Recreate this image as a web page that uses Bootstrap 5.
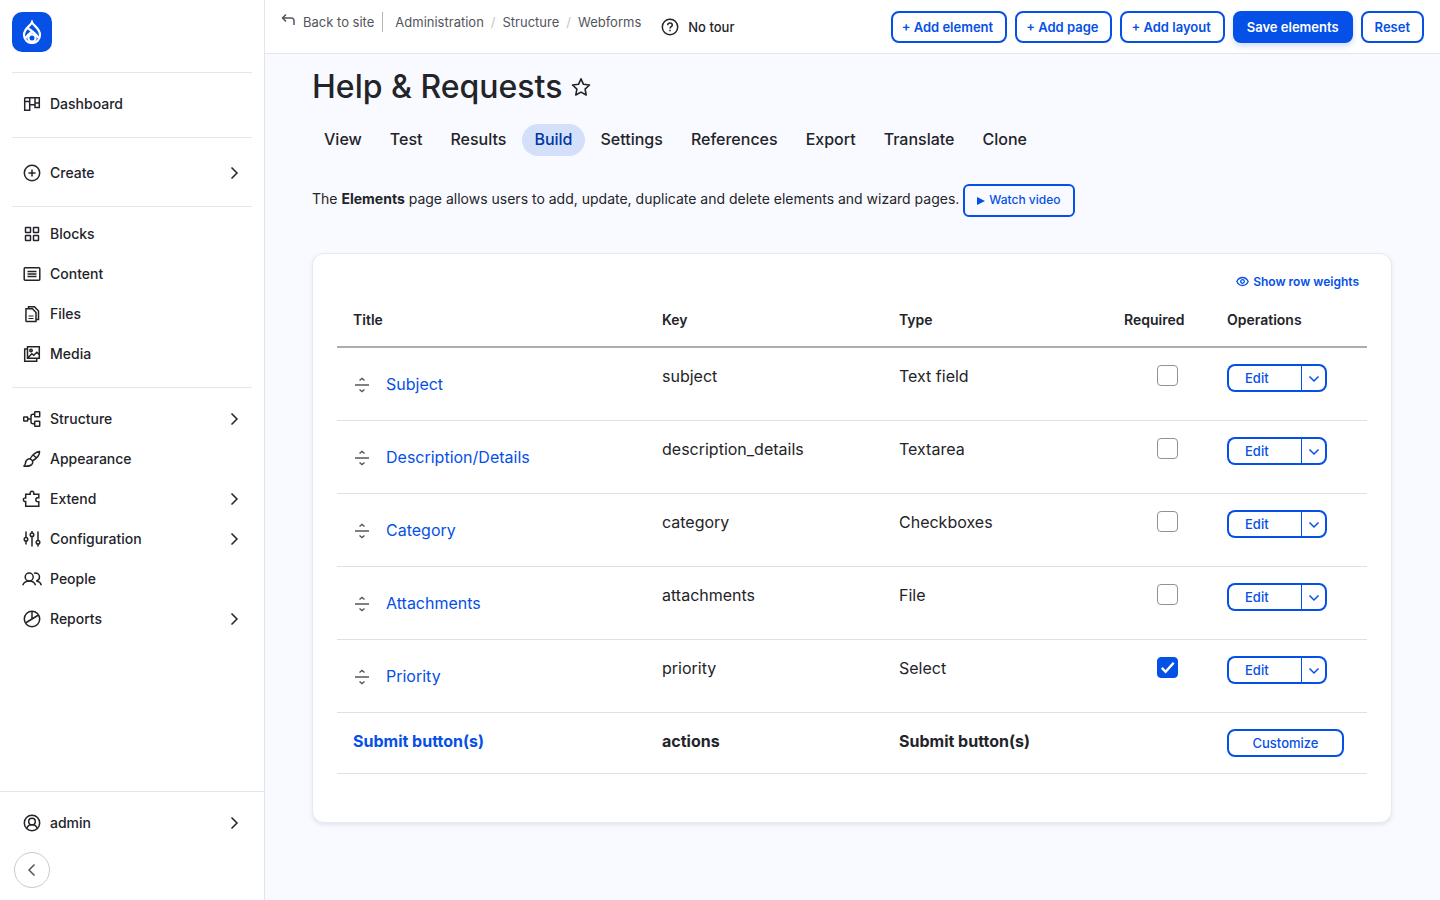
<!DOCTYPE html>
<html lang="en">
<head>
<meta charset="utf-8">
<meta name="viewport" content="width=device-width, initial-scale=1">
<title>Help &amp; Requests | Webform elements</title>
<link href="https://cdn.jsdelivr.net/npm/bootstrap@5.3.0/dist/css/bootstrap.min.css" rel="stylesheet">
<style>
:root { --accent: #0550e6; --ink: #232429; --soft: #54555b; --rule: #e4e6ea; }
body { font-family: Inter, "Liberation Sans", sans-serif; color: var(--ink); background: #f9faff; font-size: 16px; line-height: 24px; }
svg { flex: none; fill: none; stroke: currentColor; }
a { text-decoration: none; }

.sidebar { width: 265px; border-right: 1px solid #e1e6ee; }
.brand { width: 40px; height: 40px; margin: 12px 12px 20px; border-radius: 10px; background: var(--accent); color: #fff; }
.menu-group { margin: 0 12px; padding: 11px 0 13px; border-top: 1px solid var(--rule); }
.menu-group.create { padding-top: 15px; }
.menu-group.compact { padding-top: 7px; }
.menu-item { height: 40px; padding: 0 10px; gap: 8px; color: var(--ink); font-size: 14px; font-weight: 500; }
.menu-item svg { width: 20px; height: 20px; stroke-width: 1.5; }
.menu-item .chev { width: 16px; height: 16px; }
.account { padding: 11px 12px 9px; border-top: 1px solid var(--rule); }
.collapse-btn { width: 36px; height: 36px; margin: 0 14px 12px; color: var(--soft); background: #fff; border: 1px solid #c9cace; }

.topbar { min-height: 54px; padding: 11px 16px 10px; border-bottom: 1px solid var(--rule); }
.crumbs { font-size: 13px; line-height: 22px; }
.crumbs a { color: var(--soft); }
.crumbs .sep { color: #c4c5ca; margin: 0 7px; }
.vline { width: 1px; height: 20px; background: #b5b6bb; }
.tour { color: var(--ink); font-size: 13px; font-weight: 500; gap: 9px; height: 32px; margin-left: 20px; }
.btn-gin { --bs-btn-color: var(--accent); --bs-btn-bg: #fff; --bs-btn-border-color: var(--accent); --bs-btn-border-width: 2px; --bs-btn-border-radius: 8px; --bs-btn-padding-x: 12px; --bs-btn-padding-y: 0; --bs-btn-font-size: 13px; --bs-btn-font-weight: 600; --bs-btn-line-height: 28px; --bs-btn-hover-color: #fff; --bs-btn-hover-bg: var(--accent); --bs-btn-hover-border-color: var(--accent); }
.btn-gin.add { padding-left: 9px; }
.btn-gin.solid { --bs-btn-color: #fff; --bs-btn-bg: var(--accent); box-shadow: 0 3px 6px #0550e633; }
.btn-gin.video { --bs-btn-font-size: 12px; --bs-btn-font-weight: 500; --bs-btn-border-radius: 6px; --bs-btn-line-height: 28px; --bs-btn-bg: transparent; padding-bottom: 1px; }
.btn-gin.slim { --bs-btn-font-weight: 500; --bs-btn-line-height: 24px; }

.page { padding: 12px 48px 40px 47px; }
.page h1 { font-size: 32px; line-height: 42px; font-weight: 500; }
.tabs { gap: 4px; margin-top: 16px; }
.tabs .nav-link { padding: 0 12px 1px; line-height: 31px; border-radius: 16px; color: var(--ink); font-weight: 500; }
.tabs .nav-link.active { background: #d4e0fa; color: #0036a3; }
.intro { margin-top: 28px; font-size: 14px; gap: 4px; }
.intro p { line-height: 30px; }

.panel { margin-top: 36px; padding: 16px 24px 48px; background: #fff; border: 1px solid #e8eaf1; border-radius: 12px; box-shadow: 0 2px 4px #22304d1a; }
.weights { font-size: 12px; font-weight: 600; color: var(--accent); padding: 0 8px; gap: 4px; line-height: 24px; }
.elements { --bs-table-bg: transparent; --bs-table-color: var(--ink); color: var(--ink); table-layout: fixed; }
.elements a { color: var(--accent); }
.elements > :not(caption) > * > * { padding: 16px; border-bottom: 1px solid #dfe0e3; }
.elements > thead > tr > th { font-size: 14px; font-weight: 600; height: 53px; padding-top: 14px; padding-bottom: 0; border-bottom: 2px solid #acadaf; vertical-align: top; }
.elements tbody tr { height: 73px; }
.elements tbody tr.summary { height: 61px; font-weight: 700; }
.elements .label-cell { padding-top: 24px; }
.handle { gap: 15px; }
.drag { width: 18px; height: 20px; padding-top: 2px; color: var(--soft); cursor: move; }
.elements .form-check-input { width: 21px; height: 21px; margin: 1px 0 0 33px; border-color: #8e929c; border-radius: 4px; display: block; }
.elements .form-check-input:checked { background-color: var(--accent); border-color: var(--accent); background-image: url("data:image/svg+xml,%3csvg xmlns='http://www.w3.org/2000/svg' viewBox='0 0 20 20'%3e%3cpath fill='none' stroke='%23fff' stroke-width='2.600' d='m4 10.500 4 4 8.500-9.500'/%3e%3c/svg%3e"); }
.ops .btn { height: 28px; }
.ops .edit { width: 75px; padding-right: 27px; padding-left: 16px; border-right: 1px solid #8fb4f5; text-align: left; }
.ops .more { width: 26px; padding: 0; border-left: 1px solid var(--accent); }
.customize { width: 117px; height: 28px; }
.col-key { width: 237px; } .col-type { width: 225px; } .col-req { width: 103px; } .col-ops { width: 156px; }
</style>
</head>
<body>
<svg class="d-none" aria-hidden="true">
  <symbol id="right" viewBox="0 0 16 16"><path d="M5.500 2.500 11 8l-5.500 5.500"/></symbol>
  <symbol id="down" viewBox="0 0 12 12"><path d="m1.500 3.500 4.500 4.500 4.500-4.500"/></symbol>
  <symbol id="grip" viewBox="0 0 18 18"><path stroke-width="1.500" d="M2 9h14"/><path stroke-width="1.400" d="m6.500 4.500 2.500-2 2.500 2M6.500 13.500l2.500 2 2.500-2"/></symbol>
</svg>
<div class="d-flex min-vh-100">
  <aside class="sidebar bg-white d-flex flex-column flex-shrink-0">
    <a href="#" class="brand d-flex align-items-center justify-content-center" aria-label="Home">
      <svg width="20" height="24" viewBox="0 0 20 24" stroke-width="2.200"><path d="M10 2.200C9 5.500 2 8.200 2 15a8 8 0 0 0 16 0C18 8.200 11 5.500 10 2.200Z"/><path d="M6 8.300c3 2.300 7.500 4.700 10.500 9.700M10.300 11.500C7.500 13.500 5.500 15.500 3.600 18"/><circle cx="10" cy="18" r="3.600"/></svg>
    </a>
    <nav aria-label="Administration menu">
      <div class="menu-group">
        <a href="#" class="menu-item d-flex align-items-center"><svg viewBox="0 0 20 20"><path d="M2.700 3.700h14.600v9.800H13V3.700M7.700 3.700v12.600h-5V3.700M2.700 7.500h5M7.700 10.700H13M13 9h4.300"/></svg>Dashboard</a>
      </div>
      <div class="menu-group create">
        <a href="#" class="menu-item d-flex align-items-center"><svg viewBox="0 0 20 20"><circle cx="10" cy="10" r="7.700"/><path d="M10 6.500v7M6.500 10h7"/></svg>Create<svg class="chev ms-auto"><use href="#right"/></svg></a>
      </div>
      <div class="menu-group compact">
        <a href="#" class="menu-item d-flex align-items-center"><svg viewBox="0 0 20 20"><rect x="3.500" y="3.500" width="5" height="5" rx=".5"/><rect x="11.500" y="3.500" width="5" height="5" rx=".5"/><rect x="3.500" y="11.500" width="5" height="5" rx=".5"/><rect x="11.500" y="11.500" width="5" height="5" rx=".5"/></svg>Blocks</a>
        <a href="#" class="menu-item d-flex align-items-center"><svg viewBox="0 0 20 20"><rect x="2.200" y="3.700" width="15.600" height="12.600" rx="1"/><path d="M5.500 7.500h9M5.500 10h9M5.500 12.500h9"/></svg>Content</a>
        <a href="#" class="menu-item d-flex align-items-center"><svg viewBox="0 0 20 20"><path d="M4 4.700h6.500l3.500 3.800v9H4.700a.8.8 0 0 1-.8-.8ZM6.500 4.700V2.700h6l4 4.300v8.500H14"/><path stroke-width="1.200" d="M6.500 12h5M6.500 14.500h5"/></svg>Files</a>
        <a href="#" class="menu-item d-flex align-items-center"><svg viewBox="0 0 20 20"><path d="M5.500 2.700h11.800v11.600H5.500ZM5.500 5H2.700v12.300h12v-3M5.500 14.300l4.300-4.600 2 1.600 3-3 2.500 2.400"/><circle cx="9" cy="6.500" r="1.200"/></svg>Media</a>
      </div>
      <div class="menu-group">
        <a href="#" class="menu-item d-flex align-items-center"><svg viewBox="0 0 20 20"><rect x="1.700" y="8" width="4" height="4" rx=".5"/><rect x="12.700" y="2.700" width="5" height="5" rx=".5"/><rect x="12.700" y="12.300" width="5" height="5" rx=".5"/><path d="M5.700 10H9M12.700 5.200H11a2 2 0 0 0-2 2v5.600a2 2 0 0 0 2 2h1.700"/></svg>Structure<svg class="chev ms-auto"><use href="#right"/></svg></a>
        <a href="#" class="menu-item d-flex align-items-center"><svg viewBox="0 0 20 20"><path d="M1.500 17.200c2-.7 1.800-2.200 2.200-4.200.5-2.400 3-3.900 5.200-2.700 2.300 1.300 2.300 3.700.8 5.300-2 2-5.400 1.700-8.200 1.600ZM8 10c2.300-4.200 5.800-7 9.500-7.500.3 3-2.800 6.800-7 9.500M11.500 6.200l2.700 2.600"/></svg>Appearance</a>
        <a href="#" class="menu-item d-flex align-items-center"><svg viewBox="0 0 20 20"><path d="M3.700 17.200v-4.700c-1.300.2-2.300-.5-2.300-1.800s1-2 2.300-1.700V5.300h4.500C7.800 3.500 8.700 2.200 10 2.200s2.200 1.300 1.800 3.100h5v3.500c-1.700-.4-3 .3-3 1.900s1.300 2.400 3 2v4.500Z"/></svg>Extend<svg class="chev ms-auto"><use href="#right"/></svg></a>
        <a href="#" class="menu-item d-flex align-items-center"><svg viewBox="0 0 20 20"><path d="M4 2.500v6M4 12v3.500M10 2v2M10 7.500v10M16 2.500v9M16 15v2.500"/><circle cx="4" cy="10.200" r="1.800"/><circle cx="10" cy="5.700" r="1.800"/><circle cx="16" cy="13.200" r="1.800"/></svg>Configuration<svg class="chev ms-auto"><use href="#right"/></svg></a>
        <a href="#" class="menu-item d-flex align-items-center"><svg viewBox="0 0 20 20"><circle cx="7.200" cy="8" r="4"/><path d="M.7 16.200c1-2.700 3.500-4.200 6.500-4.200s5.500 1.500 6.300 4.200M12 4.200c3.300-.8 5.500 1 5.500 3.800 0 2.200-1.700 3.600-3.200 4 2.500.3 4.300 1.700 5 4.200"/></svg>People</a>
        <a href="#" class="menu-item d-flex align-items-center"><svg viewBox="0 0 20 20"><circle cx="10" cy="10" r="7.700"/><path d="M10 2.300V10M3.500 14 16.500 6"/></svg>Reports<svg class="chev ms-auto"><use href="#right"/></svg></a>
      </div>
    </nav>
    <div class="account mt-auto">
      <a href="#" class="menu-item d-flex align-items-center"><svg viewBox="0 0 20 20"><circle cx="10" cy="10" r="7.700"/><circle cx="10" cy="8.500" r="3.300"/><path d="M4.800 15.500c.7-2.400 2.700-3.700 5.200-3.700s4.500 1.300 5.200 3.700"/></svg>admin<svg class="chev ms-auto"><use href="#right"/></svg></a>
    </div>
    <button type="button" class="collapse-btn rounded-circle p-0 d-flex align-items-center justify-content-center" aria-label="Collapse sidebar"><svg width="16" height="16" viewBox="0 0 16 16" stroke-width="1.500"><path d="m10.500 2.500-5.500 5.500 5.500 5.500"/></svg></button>
  </aside>

  <div class="flex-grow-1">
    <header class="topbar bg-white d-flex align-items-start">
      <nav class="crumbs d-flex align-items-center" aria-label="Breadcrumb">
        <a href="#" class="d-flex"><svg class="me-2" width="14" height="18" viewBox="0 0 14 18" stroke-width="1.500"><path d="M5 3.500 1.500 7 5 10.500M1.500 7h9a2.500 2.500 0 0 1 2.500 2.500V14"/></svg>Back to site</a>
        <span class="vline mx-2"></span>
        <a href="#" class="ms-1">Administration</a><span class="sep">/</span><a href="#">Structure</a><span class="sep">/</span><a href="#">Webforms</a>
      </nav>
      <a href="#" class="tour d-flex align-items-center"><svg width="18" height="18" viewBox="0 0 18 18" stroke-width="1.500"><circle cx="9" cy="9" r="7.700"/><path d="M6.700 7.200C6.700 5.800 7.700 5 9 5s2.300.8 2.300 2c0 1.600-2.300 1.700-2.300 3.500M9 11.800v1.500"/></svg>No tour</a>
      <div class="d-flex gap-2 ms-auto">
        <button type="button" class="btn btn-gin add">+ Add element</button>
        <button type="button" class="btn btn-gin add">+ Add page</button>
        <button type="button" class="btn btn-gin add">+ Add layout</button>
        <button type="button" class="btn btn-gin solid">Save elements</button>
        <button type="button" class="btn btn-gin">Reset</button>
      </div>
    </header>

    <main class="page">
      <div class="d-flex align-items-center">
        <h1 class="mb-0">Help &amp; Requests</h1>
        <a href="#" class="d-flex text-reset ms-2" aria-label="Add to shortcuts"><svg width="22" height="22" viewBox="0 0 22 22" stroke-width="1.600" stroke-linejoin="round"><path d="m11 2.800 2.500 5.500 6 .7-4.400 4.100 1.100 5.900L11 16.100 5.800 19l1.100-5.900L2.500 9l6-.7Z"/></svg></a>
      </div>
      <ul class="nav tabs">
        <li><a class="nav-link" href="#">View</a></li>
        <li><a class="nav-link" href="#">Test</a></li>
        <li><a class="nav-link" href="#">Results</a></li>
        <li><a class="nav-link active" href="#" aria-current="page">Build</a></li>
        <li><a class="nav-link" href="#">Settings</a></li>
        <li><a class="nav-link" href="#">References</a></li>
        <li><a class="nav-link" href="#">Export</a></li>
        <li><a class="nav-link" href="#">Translate</a></li>
        <li><a class="nav-link" href="#">Clone</a></li>
      </ul>
      <div class="intro d-flex flex-wrap align-items-start">
        <p class="mb-0">The <strong>Elements</strong> page allows users to add, update, duplicate and delete elements and wizard pages.</p>
        <a href="#" class="btn btn-gin video"><svg class="me-1" width="8" height="8" viewBox="0 0 8 8"><path fill="currentColor" stroke="none" d="M0 0l8 4-8 4Z"/></svg>Watch video</a>
      </div>

      <section class="panel">
        <div class="d-flex justify-content-end">
          <button type="button" class="weights btn d-flex align-items-center border-0"><svg width="13" height="12" viewBox="0 0 13 12" stroke-width="1.300"><path d="M.8 5.500C2 3 4 1.500 6.500 1.500S11 3 12.200 5.500C11 8 9 9.500 6.500 9.500S2 8 .8 5.500Z"/><circle cx="6.500" cy="5.500" r="1.800"/></svg>Show row weights</button>
        </div>
        <table class="table elements mb-0">
          <colgroup><col><col class="col-key"><col class="col-type"><col class="col-req"><col class="col-ops"></colgroup>
          <thead><tr><th>Title</th><th>Key</th><th>Type</th><th>Required</th><th>Operations</th></tr></thead>
          <tbody>
            <tr><td class="label-cell"><div class="handle d-flex align-items-center"><svg class="drag"><use href="#grip"/></svg><a href="#">Subject</a></div></td><td>subject</td><td>Text field</td><td><input class="form-check-input" type="checkbox" aria-label="Subject required"></td><td><div class="btn-group ops"><button type="button" class="btn btn-gin slim edit">Edit</button><button type="button" class="btn btn-gin slim more" aria-label="More operations"><svg width="12" height="12" stroke-width="1.500"><use href="#down"/></svg></button></div></td></tr>
            <tr><td class="label-cell"><div class="handle d-flex align-items-center"><svg class="drag"><use href="#grip"/></svg><a href="#">Description/Details</a></div></td><td>description_details</td><td>Textarea</td><td><input class="form-check-input" type="checkbox" aria-label="Description/Details required"></td><td><div class="btn-group ops"><button type="button" class="btn btn-gin slim edit">Edit</button><button type="button" class="btn btn-gin slim more" aria-label="More operations"><svg width="12" height="12" stroke-width="1.500"><use href="#down"/></svg></button></div></td></tr>
            <tr><td class="label-cell"><div class="handle d-flex align-items-center"><svg class="drag"><use href="#grip"/></svg><a href="#">Category</a></div></td><td>category</td><td>Checkboxes</td><td><input class="form-check-input" type="checkbox" aria-label="Category required"></td><td><div class="btn-group ops"><button type="button" class="btn btn-gin slim edit">Edit</button><button type="button" class="btn btn-gin slim more" aria-label="More operations"><svg width="12" height="12" stroke-width="1.500"><use href="#down"/></svg></button></div></td></tr>
            <tr><td class="label-cell"><div class="handle d-flex align-items-center"><svg class="drag"><use href="#grip"/></svg><a href="#">Attachments</a></div></td><td>attachments</td><td>File</td><td><input class="form-check-input" type="checkbox" aria-label="Attachments required"></td><td><div class="btn-group ops"><button type="button" class="btn btn-gin slim edit">Edit</button><button type="button" class="btn btn-gin slim more" aria-label="More operations"><svg width="12" height="12" stroke-width="1.500"><use href="#down"/></svg></button></div></td></tr>
            <tr><td class="label-cell"><div class="handle d-flex align-items-center"><svg class="drag"><use href="#grip"/></svg><a href="#">Priority</a></div></td><td>priority</td><td>Select</td><td><input class="form-check-input" type="checkbox" aria-label="Priority required" checked></td><td><div class="btn-group ops"><button type="button" class="btn btn-gin slim edit">Edit</button><button type="button" class="btn btn-gin slim more" aria-label="More operations"><svg width="12" height="12" stroke-width="1.500"><use href="#down"/></svg></button></div></td></tr>
            <tr class="summary"><td><a href="#">Submit button(s)</a></td><td>actions</td><td>Submit button(s)</td><td></td><td><button type="button" class="btn btn-gin slim customize">Customize</button></td></tr>
          </tbody>
        </table>
      </section>
    </main>
  </div>
</div>
<script src="https://cdn.jsdelivr.net/npm/bootstrap@5.3.0/dist/js/bootstrap.bundle.min.js"></script>
</body>
</html>
